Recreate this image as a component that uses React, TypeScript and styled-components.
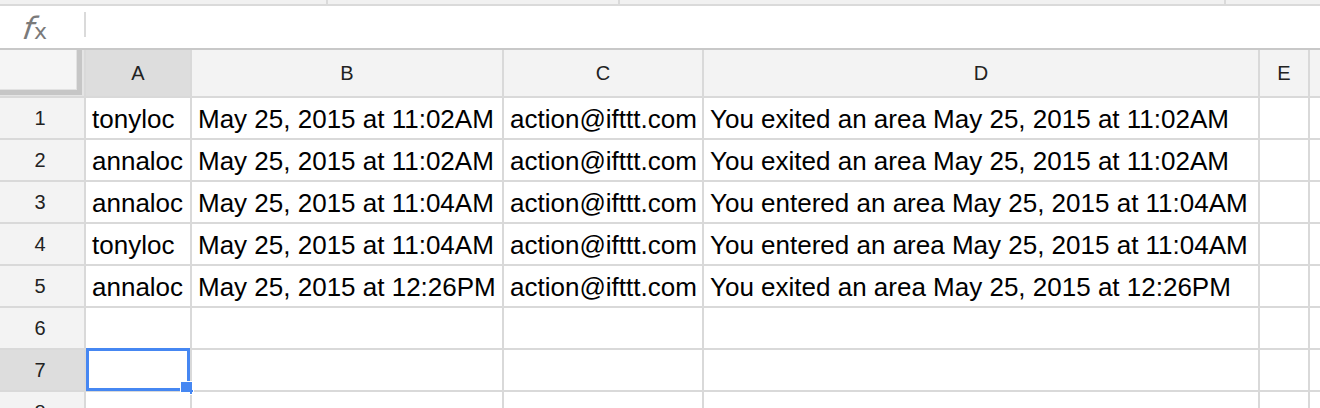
import React from "react";
import styled, { createGlobalStyle } from "styled-components";

const GlobalStyle = createGlobalStyle`
  html, body { margin: 0; padding: 0; background: #ffffff; }
  body { font-family: "Liberation Sans", Arial, sans-serif; overflow: hidden; }
`;

const Page = styled.div`
  width: 1320px;
  height: 408px;
  overflow: hidden;
  display: flex;
  flex-direction: column;
  background: #ffffff;
`;

const TopStrip = styled.div`
  display: flex;
  height: 6px;
  flex: 0 0 6px;
  box-sizing: border-box;
  background: #f1f1f1;
  border-bottom: 2px solid #dadada;
`;

const StripSegment = styled.div<{ $w?: number }>`
  box-sizing: border-box;
  flex: ${(p) => (p.$w ? `0 0 ${p.$w}px` : "1 1 auto")};
  border-right: ${(p) => (p.$w ? "2px solid #dadada" : "none")};
`;

const FormulaBar = styled.div`
  display: flex;
  align-items: flex-start;
  height: 44px;
  flex: 0 0 44px;
  box-sizing: border-box;
  border-bottom: 2px solid #c8c8c8;
`;

const FxLabel = styled.div`
  width: 84px;
  height: 42px;
  box-sizing: border-box;
  padding-left: 23px;
  padding-top: 4px;
  display: flex;
  align-items: baseline;
  color: #7a7a7a;
  font-family: "DejaVu Sans", "Liberation Sans", sans-serif;
`;

const FxF = styled.span`
  display: inline-block;
  font-style: italic;
  font-size: 31px;
  line-height: 36px;
  transform: skewX(-8deg);
`;

const FxX = styled.span`
  font-size: 22px;
  line-height: 36px;
  margin-left: 0px;
`;

const FxDivider = styled.div`
  width: 2px;
  height: 25px;
  margin-top: 6px;
  background: #dadada;
`;

const Sheet = styled.div`
  display: grid;
  grid-template-columns: 84px 104px 310px 198px 554px 48px 1fr;
  grid-template-rows: 46px;
  grid-auto-rows: 40px;
  gap: 2px;
  background: #d9d9d9;
  flex: 1 1 auto;
  overflow: hidden;
  align-content: start;
`;

const Corner = styled.div`
  background: #f5f5f5;
  box-shadow: inset -2px -1px 0 #e4e4e4, inset -7px -6px 0 #c6c6c6,
    inset -8px -7px 0 #e2e2e2;
`;

const ColHeader = styled.div<{ $selected?: boolean }>`
  background: ${(p) => (p.$selected ? "#dddddd" : "#f3f3f3")};
  display: flex;
  align-items: center;
  justify-content: center;
  font-size: 20px;
  color: #222222;
`;

const RowHeader = styled.div<{ $selected?: boolean }>`
  background: ${(p) => (p.$selected ? "#dddddd" : "#f3f3f3")};
  display: flex;
  align-items: center;
  justify-content: center;
  padding-right: 4px;
  font-size: 20px;
  color: #222222;
`;

const Cell = styled.div`
  position: relative;
  background: #ffffff;
  box-sizing: border-box;
  padding: 3px 6px 0;
  font-size: 26px;
  line-height: 37px;
  color: #000000;
  white-space: nowrap;
`;

const Selection = styled.div`
  position: absolute;
  top: -2px;
  left: 0;
  right: 0;
  bottom: -1px;
  border: 3px solid #4687f2;
  pointer-events: none;
`;

const FillHandle = styled.div`
  position: absolute;
  right: -6px;
  bottom: -6px;
  width: 12px;
  height: 12px;
  background: #4687f2;
  box-shadow: 0 0 0 1px #ffffff;
`;

const columns = ["A", "B", "C", "D", "E", ""];

const rows: string[][] = [
  ["tonyloc", "May 25, 2015 at 11:02AM", "action@ifttt.com", "You exited an area May 25, 2015 at 11:02AM"],
  ["annaloc", "May 25, 2015 at 11:02AM", "action@ifttt.com", "You exited an area May 25, 2015 at 11:02AM"],
  ["annaloc", "May 25, 2015 at 11:04AM", "action@ifttt.com", "You entered an area May 25, 2015 at 11:04AM"],
  ["tonyloc", "May 25, 2015 at 11:04AM", "action@ifttt.com", "You entered an area May 25, 2015 at 11:04AM"],
  ["annaloc", "May 25, 2015 at 12:26PM", "action@ifttt.com", "You exited an area May 25, 2015 at 12:26PM"],
  [],
  [],
  [],
];

export default function App() {
  return (
    <Page>
      <GlobalStyle />
      <TopStrip>
        <StripSegment $w={328} />
        <StripSegment $w={292} />
        <StripSegment $w={606} />
        <StripSegment />
      </TopStrip>
      <FormulaBar>
        <FxLabel>
          <FxF>f</FxF>
          <FxX>x</FxX>
        </FxLabel>
        <FxDivider />
      </FormulaBar>
      <Sheet>
        <Corner />
        {columns.map((c, i) => (
          <ColHeader key={`h${i}`} $selected={c === "A"}>
            {c}
          </ColHeader>
        ))}
        {rows.map((r, ri) => (
          <React.Fragment key={`r${ri}`}>
            <RowHeader $selected={ri === 6}>{ri + 1}</RowHeader>
            {columns.map((_, ci) => (
              <Cell key={`c${ri}-${ci}`}>
                {r[ci] ?? ""}
                {ri === 6 && ci === 0 && (
                  <Selection>
                    <FillHandle />
                  </Selection>
                )}
              </Cell>
            ))}
          </React.Fragment>
        ))}
      </Sheet>
    </Page>
  );
}
